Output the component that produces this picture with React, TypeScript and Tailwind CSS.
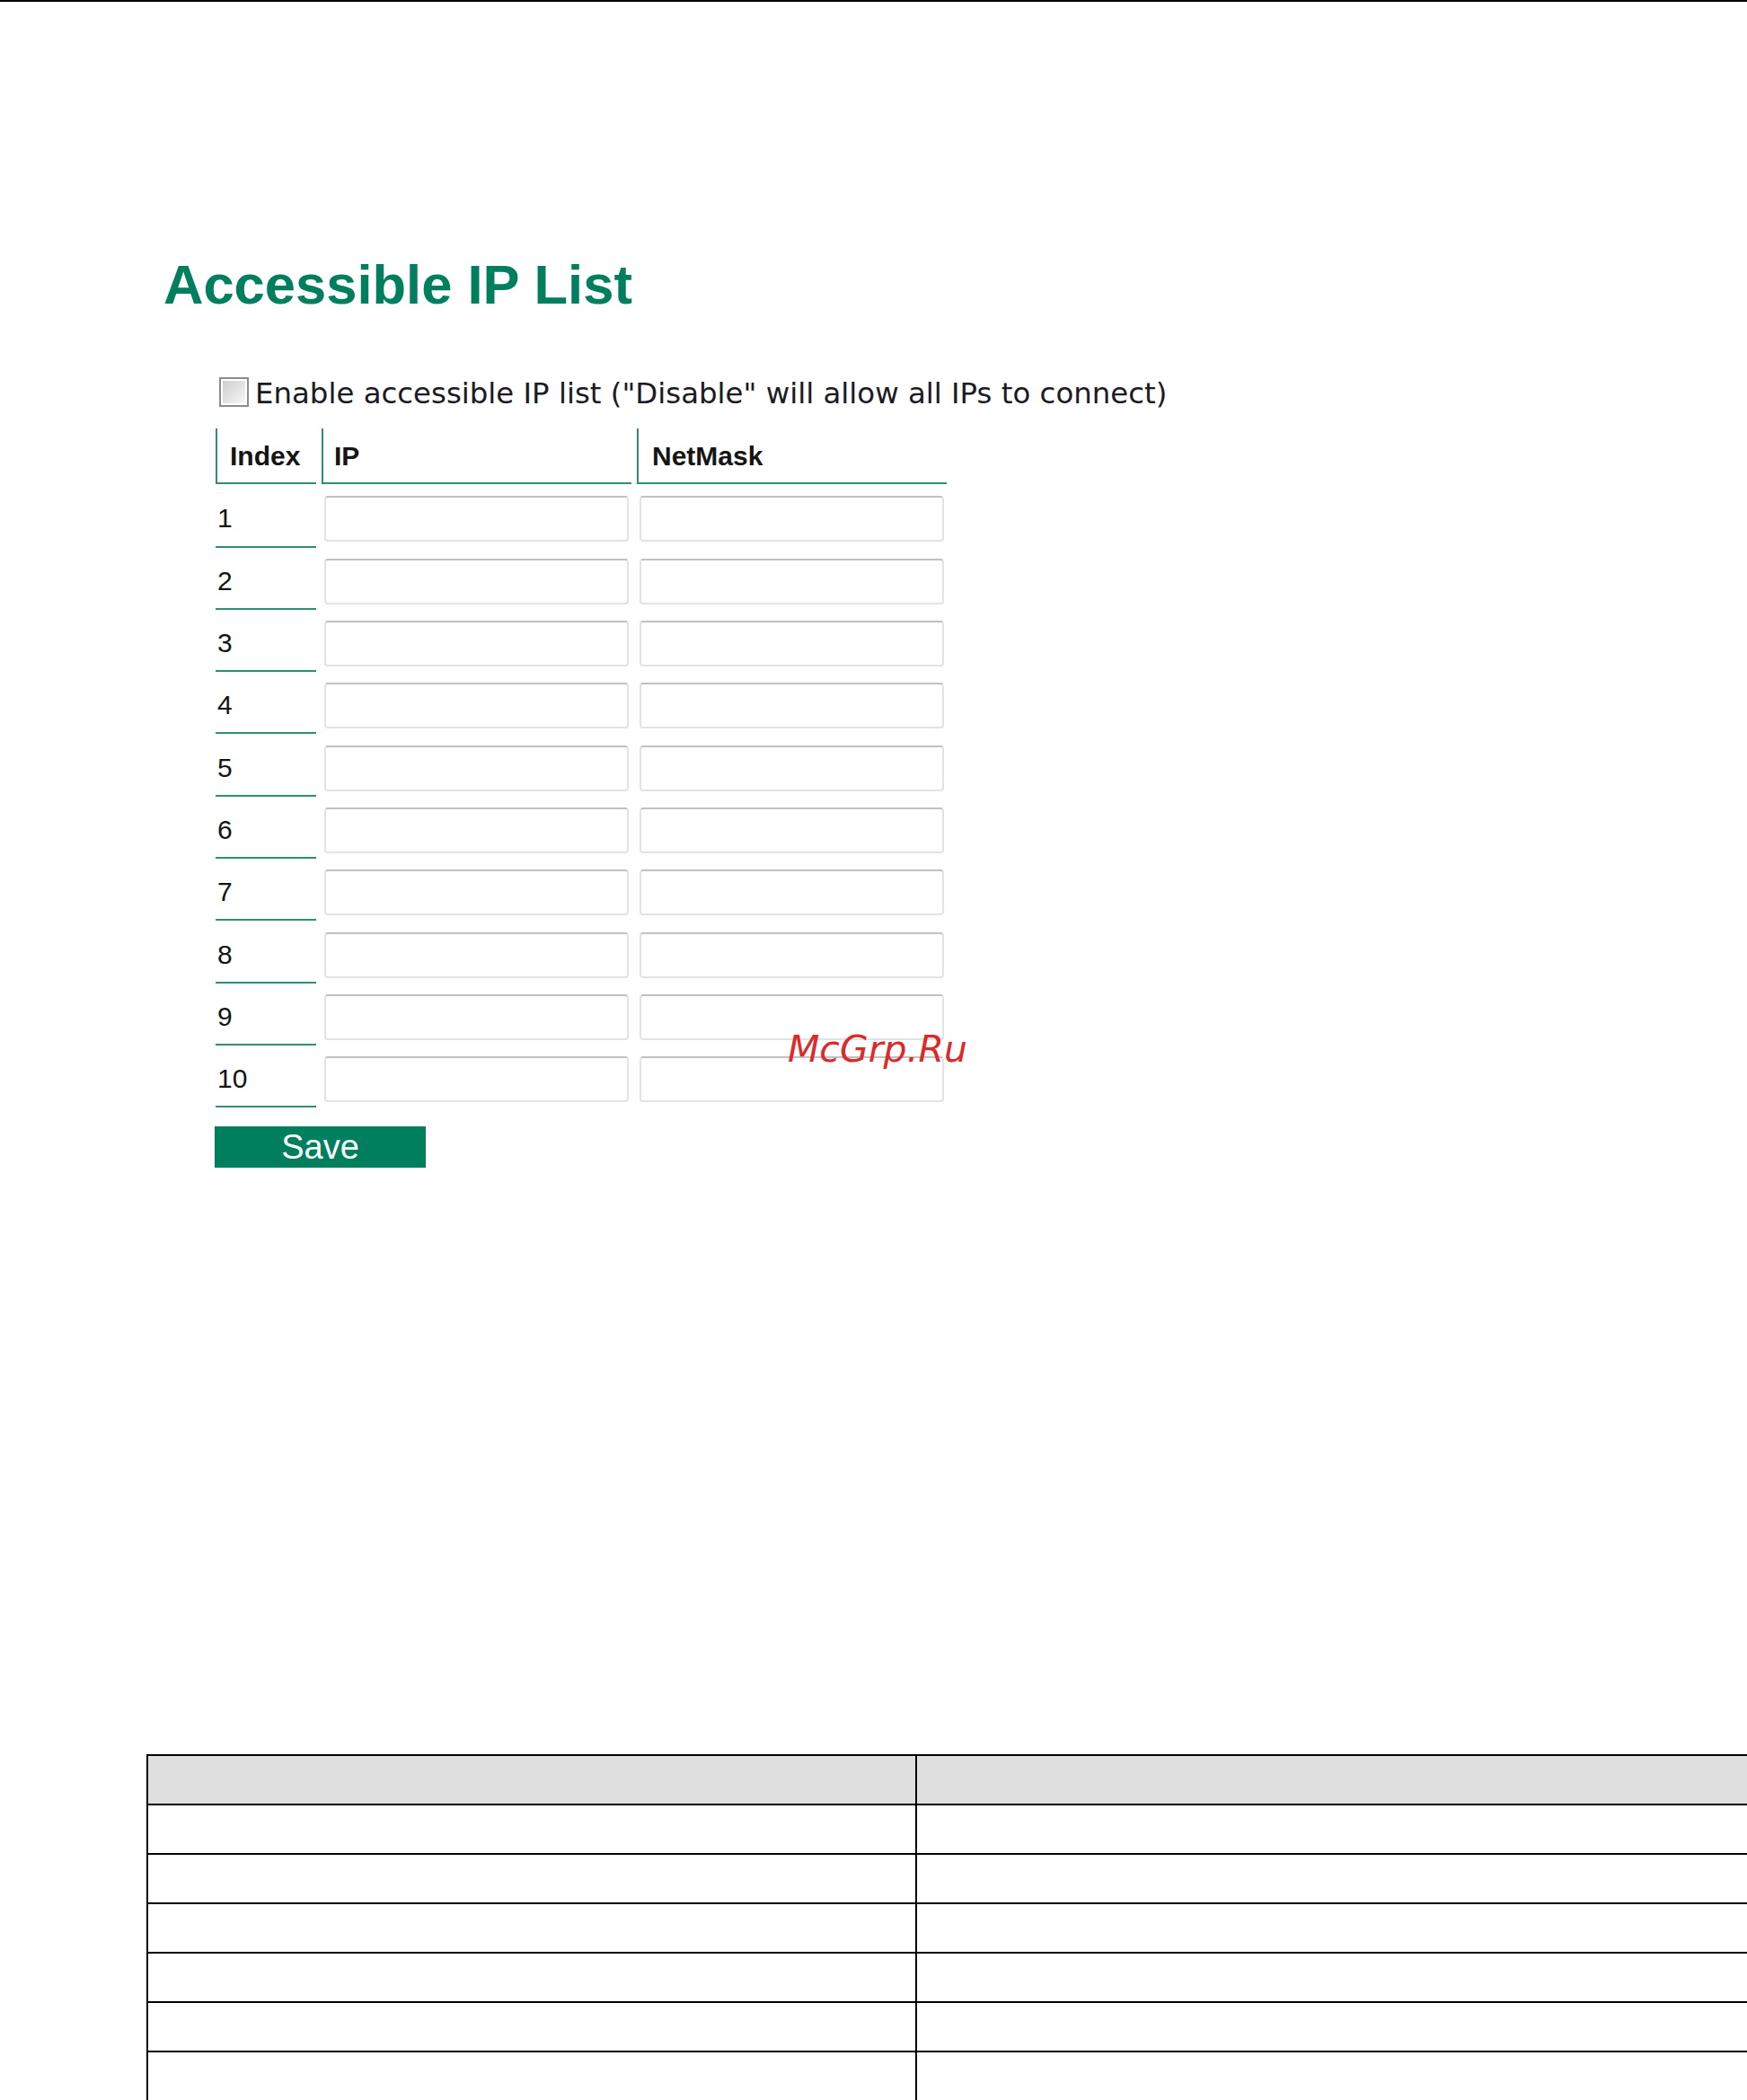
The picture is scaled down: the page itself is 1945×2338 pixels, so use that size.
import React from "react";

const rows = [1, 2, 3, 4, 5, 6, 7, 8, 9, 10];

function Field() {
  return (
    <div className="flex h-full items-center justify-center">
      <input
        type="text"
        className="h-[51px] w-[339px] rounded-[4px] border-2 border-[#e2e3e8] border-t-[#c0c0c5] bg-white outline-none"
      />
    </div>
  );
}

export default function App() {
  return (
    <div className="relative min-h-[2338px] w-[1945px] overflow-hidden bg-white font-['Liberation_Sans',Arial,sans-serif]">
      <div className="h-[2px] w-full bg-black" />

      <div className="pl-[182px] pt-[284px]">
        <h1 className="text-[61.5px] font-bold leading-[61px] text-[#007f5f]">Accessible IP List</h1>
      </div>

      <div className="mt-[73px] flex h-[33px] items-start pl-[244px]">
        <div className="h-[33px] w-[33px] shrink-0 border-2 border-[#8c8c8c] p-[2px]">
          <div className="h-full w-full bg-linear-to-br from-[#cfcfcf] to-[#f6f6f6]" />
        </div>
        <span className="ml-[7px] mt-[2px] whitespace-nowrap font-['DejaVu_Sans',Verdana,sans-serif] text-[32.4px] leading-[33px] text-[#1c1a24]">
          Enable accessible IP list ("Disable" will allow all IPs to connect)
        </span>
      </div>

      <div className="ml-[240px] mt-[24px] grid grid-cols-[112px_345px_345px] auto-rows-[63.3px] gap-[6px] text-[#151515]">
        <div className="flex h-[62px] items-center border-b-2 border-l-2 border-[#2f8f72] pl-[14px] text-[30px] font-bold">
          Index
        </div>
        <div className="flex h-[62px] items-center border-b-2 border-l-2 border-[#2f8f72] pl-[12px] text-[30px] font-bold">
          IP
        </div>
        <div className="flex h-[62px] items-center border-b-2 border-l-2 border-[#2f8f72] pl-[15px] text-[30px] font-bold">
          NetMask
        </div>
        {rows.map((n) => (
          <React.Fragment key={n}>
            <div className="flex items-center border-b-2 border-[#2f8f72] pl-[2px] text-[30px]">{n}</div>
            <Field />
            <Field />
          </React.Fragment>
        ))}
      </div>

      <button className="ml-[239px] mt-[21px] flex h-[46px] w-[235px] items-center justify-center bg-[#007f5f] text-[38px] leading-none text-white">
        Save
      </button>

      <div className="ml-[163px] mt-[653px] w-[1820px] border-l-2 border-t-2 border-black">
        {[0, 1, 2, 3, 4, 5, 6].map((i) => (
          <div
            key={i}
            className={`grid h-[55px] grid-cols-[856px_1fr] border-b-2 border-black ${i === 0 ? "bg-[#dfdfdf]" : "bg-white"}`}
          >
            <div className="border-r-2 border-black" />
            <div />
          </div>
        ))}
      </div>

      <div className="absolute left-[877px] top-[1148px] font-['DejaVu_Sans',sans-serif] text-[41px] italic leading-[41px] text-[#dc2a2a]">
        McGrp.Ru
      </div>
    </div>
  );
}
